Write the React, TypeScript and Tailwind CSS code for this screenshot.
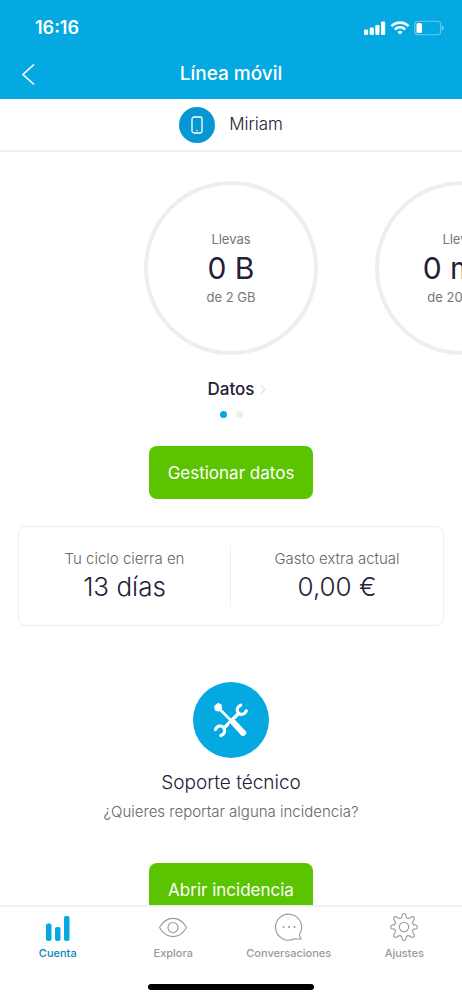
import React, { useState } from "react";

type Usage = { value: string; limit: string };

const usages: Usage[] = [
    { value: "0 B", limit: "de 2 GB" },
    { value: "0 min", limit: "de 200 min" }
];

const StatusBar: React.FC = () => (
    <div className="flex h-14 items-center justify-between pl-[35px] pr-[18px]">
        <span className="text-lg font-semibold">16:16</span>
        <div className="flex items-center gap-1">
            <svg width="22" height="14" viewBox="0 0 22 14" fill="currentColor">
                <rect x="0" y="8.5" width="4.2" height="5.5" rx="1.2" />
                <rect x="5.7" y="6.5" width="4.2" height="7.5" rx="1.2" />
                <rect x="11.3" y="4" width="4.2" height="10" rx="1.2" />
                <rect x="17" y="0.5" width="4.2" height="13.5" rx="1.2" />
            </svg>
            <svg width="20" height="14" viewBox="0 0 20 14" fill="none" stroke="currentColor">
                <path d="M1.5 5.2a12 12 0 0 1 17 0" strokeWidth="2.6" />
                <path d="M4.8 8.5a7.4 7.4 0 0 1 10.4 0" strokeWidth="2.5" />
                <path d="M10 13.6 7.4 11a3.8 3.8 0 0 1 5.2 0z" fill="currentColor" stroke="none" />
            </svg>
            <svg width="30" height="16" viewBox="0 0 30 16" fill="none">
                <rect x="0.75" y="1.25" width="26" height="13.5" rx="3.5" stroke="#fff" strokeOpacity="0.4" strokeWidth="1.2" />
                <rect x="2.5" y="3" width="5.5" height="10" rx="1.5" fill="#fff" />
                <path d="M28.2 5.5c2 .8 2 4.2 0 5z" fill="#fff" fillOpacity="0.5" />
            </svg>
        </div>
    </div>
);

const ToolsIcon: React.FC = () => (
    <svg width="36" height="36" viewBox="0 0 36 36" fill="none" stroke="#fff">
        <path d="M10 27 26 11" strokeWidth="3.4" />
        <path d="M27.7 3.2C24 4.6 23.2 8.400 25.2 10.9 27.5 13.4 31.8 12.7 33.3 8.8" strokeWidth="3.2" strokeLinecap="round" />
        <path d="M2.500 27.500C4 23.7 8.2 23 10.6 25.5 12.7 28 11.8 32.2 7.8 33.5" strokeWidth="3.2" strokeLinecap="round" />
        <path d="M5 5.5 20 20.5" strokeWidth="2.6" />
        <path d="M1.8 4.5 5 1.8 7.8 3l.4 3.2-2.800 2.600L2.800 8z" fill="#fff" strokeWidth="1.6" strokeLinejoin="round" />
        <path d="M19 19.5 30 31.5" stroke="#03a9e0" strokeWidth="8.2" />
        <path d="M17 21 21.200 17 33 29.600Q34 31 32.800 32.200L31.200 33.800Q29.500 34.800 28.300 33.500z" fill="#fff" stroke="none" />
    </svg>
);

const BarsIcon: React.FC = () => (
    <svg width="28" height="28" viewBox="0 0 28 28" fill="#03a9e0">
        <rect x="2" y="10.5" width="5.5" height="17.5" rx="2" />
        <rect x="11" y="14" width="5.5" height="14" rx="2" />
        <rect x="20" y="3" width="5.5" height="25" rx="2" />
    </svg>
);

const EyeIcon: React.FC = () => (
    <svg width="28" height="28" viewBox="0 0 28 28" fill="none" stroke="currentColor" strokeWidth="1.1">
        <path d="M.5 14.500C4 8.500 8.500 5.400 14 5.400S24 8.500 27.500 14.500C24 20.500 19.500 23.600 14 23.600S4 20.500 .5 14.500z" />
        <circle cx="14" cy="14.500" r="5" />
    </svg>
);

const ChatIcon: React.FC = () => (
    <svg width="28" height="28" viewBox="0 0 28 28" fill="none" stroke="currentColor" strokeWidth="1.1">
        <path d="M24.600 21A13 13 0 1 0 19.500 25.700Q22.500 26.200 26 25.900 24.300 23.500 24.600 21z" />
        <g fill="currentColor" stroke="none">
            <circle cx="8.5" cy="14" r="1" />
            <circle cx="14" cy="14" r="1" />
            <circle cx="19.5" cy="14" r="1" />
        </g>
    </svg>
);

const GearIcon: React.FC = () => (
    <svg width="28" height="28" viewBox="0 0 28 28" fill="none" stroke="currentColor" strokeWidth="1.1" strokeLinejoin="round">
        <path d="M12.200 2Q14-1 15.800 2L16.400 4.600Q18 6 19.700 5L21.600 3.800Q25 3 24.200 6.400L23 8.300Q22 10 23.400 11.600L26 12.200Q29 14 26 15.800L23.400 16.400Q22 18 23 19.700L24.200 21.600Q25 25 21.600 24.200L19.700 23Q18 22 16.400 23.400L15.800 26Q14 29 12.200 26L11.600 23.400Q10 22 8.300 23L6.400 24.200Q3 25 3.800 21.600L5 19.700Q6 18 4.600 16.400L2 15.800Q-1 14 2 12.200L4.600 11.600Q6 10 5 8.300L3.800 6.400Q3 3 6.400 3.800L8.300 5Q10 6 11.600 4.600z" />
        <circle cx="14" cy="14" r="4.700" />
    </svg>
);

const tabs = [
    { label: "Cuenta", Icon: BarsIcon },
    { label: "Explora", Icon: EyeIcon },
    { label: "Conversaciones", Icon: ChatIcon },
    { label: "Ajustes", Icon: GearIcon }
];

const App: React.FC = () => {
    const [activeTab, setActiveTab] = useState<string>("Cuenta");

    return (
        <div className="flex h-screen flex-col bg-white font-['Inter',sans-serif] text-[#242038]">
            <header className="shrink-0 bg-[#03a9e0] text-white">
                <StatusBar />
                <div className="grid h-[43px] grid-cols-[1fr_auto_1fr] items-center pb-1.5">
                    <button type="button" aria-label="Atrás" className="ml-5 w-5">
                        <svg width="16" height="22" viewBox="0 0 16 22" fill="none" stroke="currentColor" strokeWidth="1.6">
                            <path d="M14 .5 3 10.500l11 10" />
                        </svg>
                    </button>
                    <h1 className="text-[19px] font-medium">Línea móvil</h1>
                </div>
            </header>

            <main className="min-h-0 flex-1 overflow-y-auto [scrollbar-width:none]">
                <div className="flex h-[53px] items-center justify-center gap-3.5 border-b-2 border-[#f1f1f1]">
                    <span className="flex size-9 items-center justify-center rounded-full bg-[#0598d3]">
                        <svg width="12" height="18" viewBox="0 0 12 18" fill="none" stroke="#fff" strokeWidth="1.3">
                            <rect x="1" y="1" width="10" height="16" rx="2" />
                            <path d="M5.5 14.5h1" />
                        </svg>
                    </span>
                    <span className="text-[17px] font-light">Miriam</span>
                </div>

                <section className="pt-[29px]">
                    <div className="flex gap-[57px] overflow-x-auto px-[calc(50%-87px)] [scrollbar-width:none]">
                        {usages.map((usage) => (
                            <div
                                key={usage.value}
                                className="flex size-[174px] shrink-0 flex-col items-center justify-center rounded-full border-4 border-[#eee]"
                            >
                                <span className="text-[13px] leading-5 text-[#777]">Llevas</span>
                                <span className="text-3xl leading-[38px]">{usage.value}</span>
                                <span className="text-[13px] leading-5 text-[#777]">{usage.limit}</span>
                            </div>
                        ))}
                    </div>
                    <div className="mt-5 flex justify-center">
                        <a href="#datos" className="flex items-center gap-1.5 pl-3 text-[17px] leading-7 font-medium">
                            Datos
                            <svg width="6" height="9" viewBox="0 0 6 9" fill="none" stroke="#ccc" strokeWidth="1">
                                <path d="M1 .5l4 4-4 4" />
                            </svg>
                        </a>
                    </div>
                    <div className="mt-2 flex justify-center gap-[9px]">
                        <span className="size-[7px] rounded-full bg-[#03a9e0]" />
                        <span className="size-[7px] rounded-full bg-[#eee]" />
                    </div>
                    <div className="mt-7 flex justify-center">
                        <button type="button" className="h-[53px] rounded-lg bg-[#5ac400] px-[19px] pt-0.5 text-[17px] text-white">
                            Gestionar datos
                        </button>
                    </div>
                </section>

                <section className="mx-[18px] mt-[27px] grid grid-cols-2 rounded-lg border border-[#eee] py-[18px] text-center">
                    <div className="border-r border-[#eee]">
                        <p className="pt-0.5 text-[15px] leading-6 font-light text-[#666]">Tu ciclo cierra en</p>
                        <p className="pb-1 text-[26px] leading-8 font-light">13 días</p>
                    </div>
                    <div>
                        <p className="pt-0.5 text-[15px] leading-6 font-light text-[#666]">Gasto extra actual</p>
                        <p className="pb-1 text-[26px] leading-8 font-light">0,00 €</p>
                    </div>
                </section>

                <section className="mt-14 flex flex-col items-center pb-7">
                    <span className="flex size-[76px] items-center justify-center rounded-full bg-[#03a9e0]">
                        <ToolsIcon />
                    </span>
                    <h2 className="mt-[11px] text-[19px] leading-7 font-light">Soporte técnico</h2>
                    <p className="mt-[3px] text-[15px] leading-6 font-light text-[#666]">¿Quieres reportar alguna incidencia?</p>
                    <button type="button" className="mt-[39px] h-[53px] shrink-0 rounded-lg bg-[#5ac400] px-[19px] pt-0.5 text-[17px] text-white">
                        Abrir incidencia
                    </button>
                </section>
            </main>

            <nav className="shrink-0 border-t-2 border-[#f1f1f1] bg-white">
                <div className="grid grid-cols-4 pt-1.5">
                    {tabs.map(({ label, Icon }) => (
                        <button
                            key={label}
                            type="button"
                            onClick={() => setActiveTab(label)}
                            className={`flex flex-col items-center gap-1 text-[11px] leading-4 font-medium ${
                                activeTab === label ? "text-[#0887b8]" : "text-[#999]"
                            }`}
                        >
                            <Icon />
                            {label}
                        </button>
                    ))}
                </div>
                <div className="mx-auto mt-[23px] mb-[9px] h-1.5 w-[36%] rounded-full bg-black" />
            </nav>
        </div>
    );
};

export default App;
